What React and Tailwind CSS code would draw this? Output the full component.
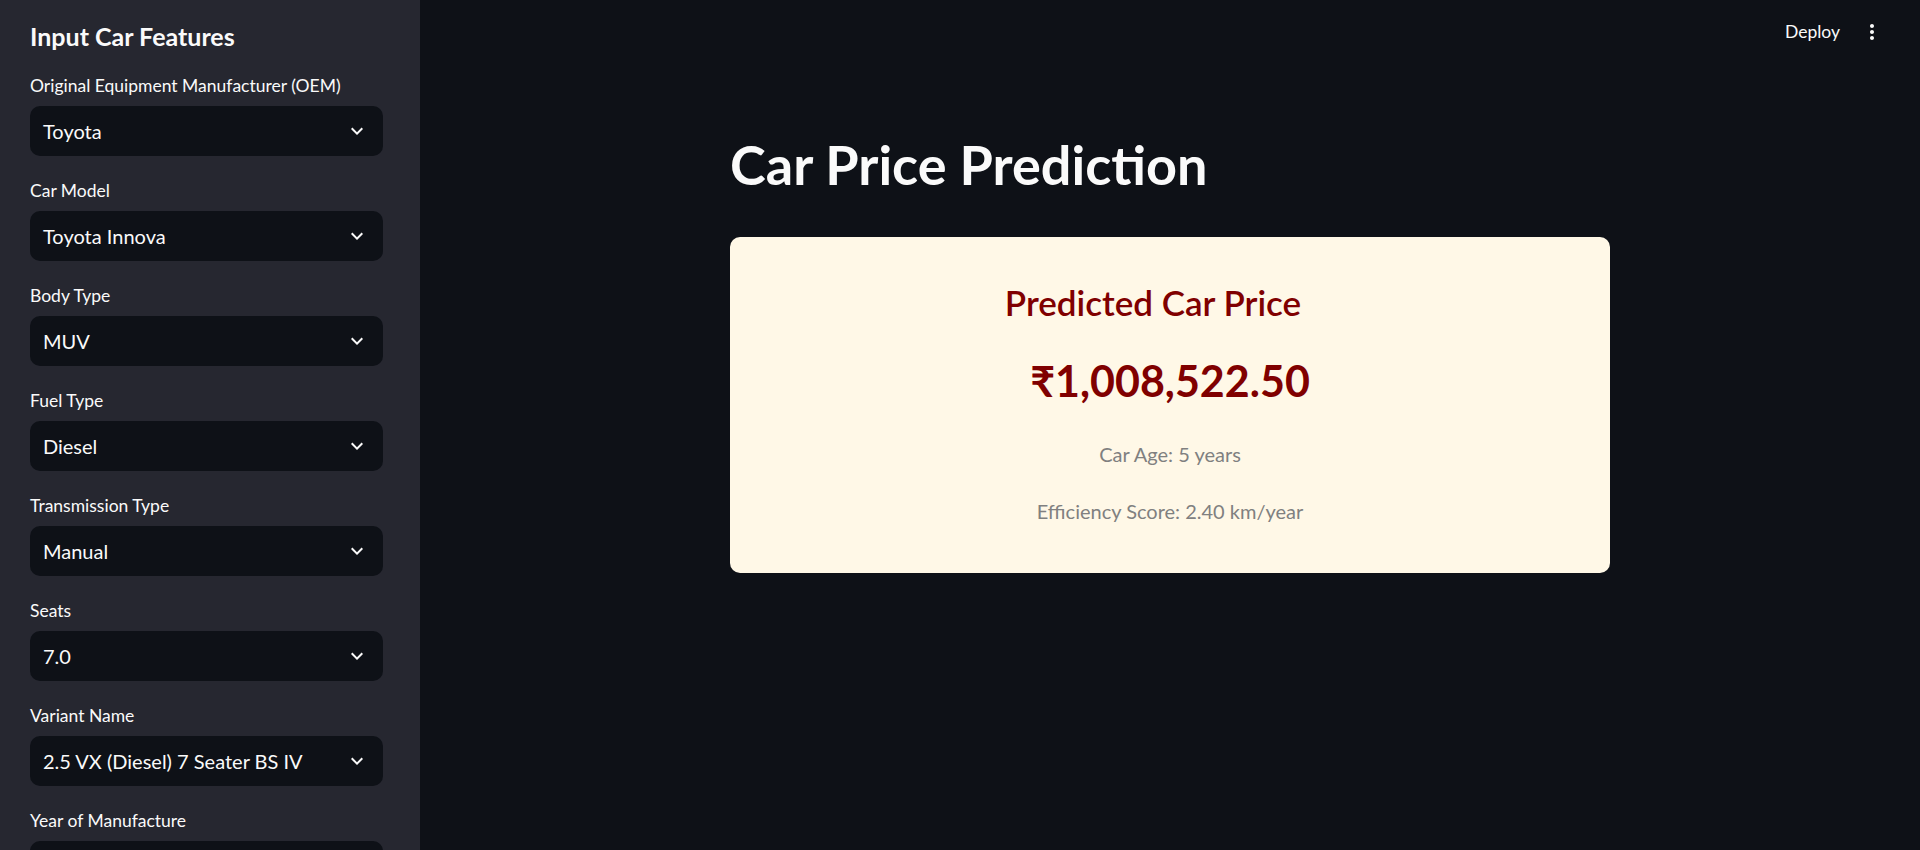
import React from 'react';

const fields = [
    { label: 'Original Equipment Manufacturer (OEM)', value: 'Toyota' },
    { label: 'Car Model', value: 'Toyota Innova' },
    { label: 'Body Type', value: 'MUV' },
    { label: 'Fuel Type', value: 'Diesel' },
    { label: 'Transmission Type', value: 'Manual' },
    { label: 'Seats', value: '7.0' },
    { label: 'Variant Name', value: '2.5 VX (Diesel) 7 Seater BS IV' },
    { label: 'Year of Manufacture', value: '' },
];

const Chevron = () => (
    <svg width="24" height="24" viewBox="0 0 24 24" fill="#fafafa">
        <path d="M16.59 8.59L12 13.17 7.41 8.59 6 10l6 6 6-6z" />
    </svg>
);

const SelectBox = ({ label, value }) => (
    <div className="flex flex-col">
        <label className="text-[17.5px] leading-[22px] text-[#fafafa]">{label}</label>
        <div className="mt-[9px] h-[50px] flex items-center justify-between rounded-[10px] bg-[#0e1117] pl-[13px] pr-[14px]">
            <span className="text-[20px] text-[#fafafa]">{value}</span>
            <Chevron />
        </div>
    </div>
);

const App = () => {
    return (
        <div className="flex h-[850px] w-full overflow-hidden bg-[#0e1117] font-['Source_Sans_Pro',Lato,sans-serif]">
            {/* sidebar */}
            <aside className="w-[420px] shrink-0 bg-[#262730] pl-[30px] pr-[37px] pt-[21px]">
                <h2 className="text-[25px] leading-[30px] font-bold text-[#fafafa]">Input Car Features</h2>
                <div className="mt-[24px] flex flex-col gap-[24px]">
                    {fields.map(f => <SelectBox key={f.label} label={f.label} value={f.value} />)}
                </div>
            </aside>

            {/* main */}
            <main className="flex flex-1 flex-col">
                <div className="flex h-[64px] items-center justify-end gap-[20px] pr-[36px]">
                    <button className="text-[17.5px] text-[#fafafa]">Deploy</button>
                    <svg width="24" height="24" viewBox="0 0 24 24" fill="#fafafa">
                        <path d="M12 8c1.1 0 2-.9 2-2s-.9-2-2-2-2 .9-2 2 .9 2 2 2zm0 2c-1.1 0-2 .9-2 2s.9 2 2 2 2-.9 2-2-.9-2-2-2zm0 6c-1.1 0-2 .9-2 2s.9 2 2 2 2-.9 2-2-.9-2-2-2z" />
                    </svg>
                </div>
                <div className="mx-auto w-[880px] pt-[68px]">
                    <h1 className="text-[54px] leading-[66px] font-bold text-[#fafafa]">Car Price Prediction</h1>
                    <div className="mt-[39px] flex flex-col items-center rounded-[10px] bg-[#fff8e7] pt-[44px] pb-[48px]">
                        <h2 className="pr-[34px] text-[35px] leading-[42px] font-semibold text-[#800000]">Predicted Car Price</h2>
                        <div className="mt-[32px] text-[43px] leading-[52px] font-bold text-[#800000]">₹1,008,522.50</div>
                        <p className="mt-[33px] text-[20px] leading-[28px] text-[#808080]">Car Age: 5 years</p>
                        <p className="mt-[29px] text-[20px] leading-[28px] text-[#808080]">Efficiency Score: 2.40 km/year</p>
                    </div>
                </div>
            </main>
        </div>
    );
};

export default App;
